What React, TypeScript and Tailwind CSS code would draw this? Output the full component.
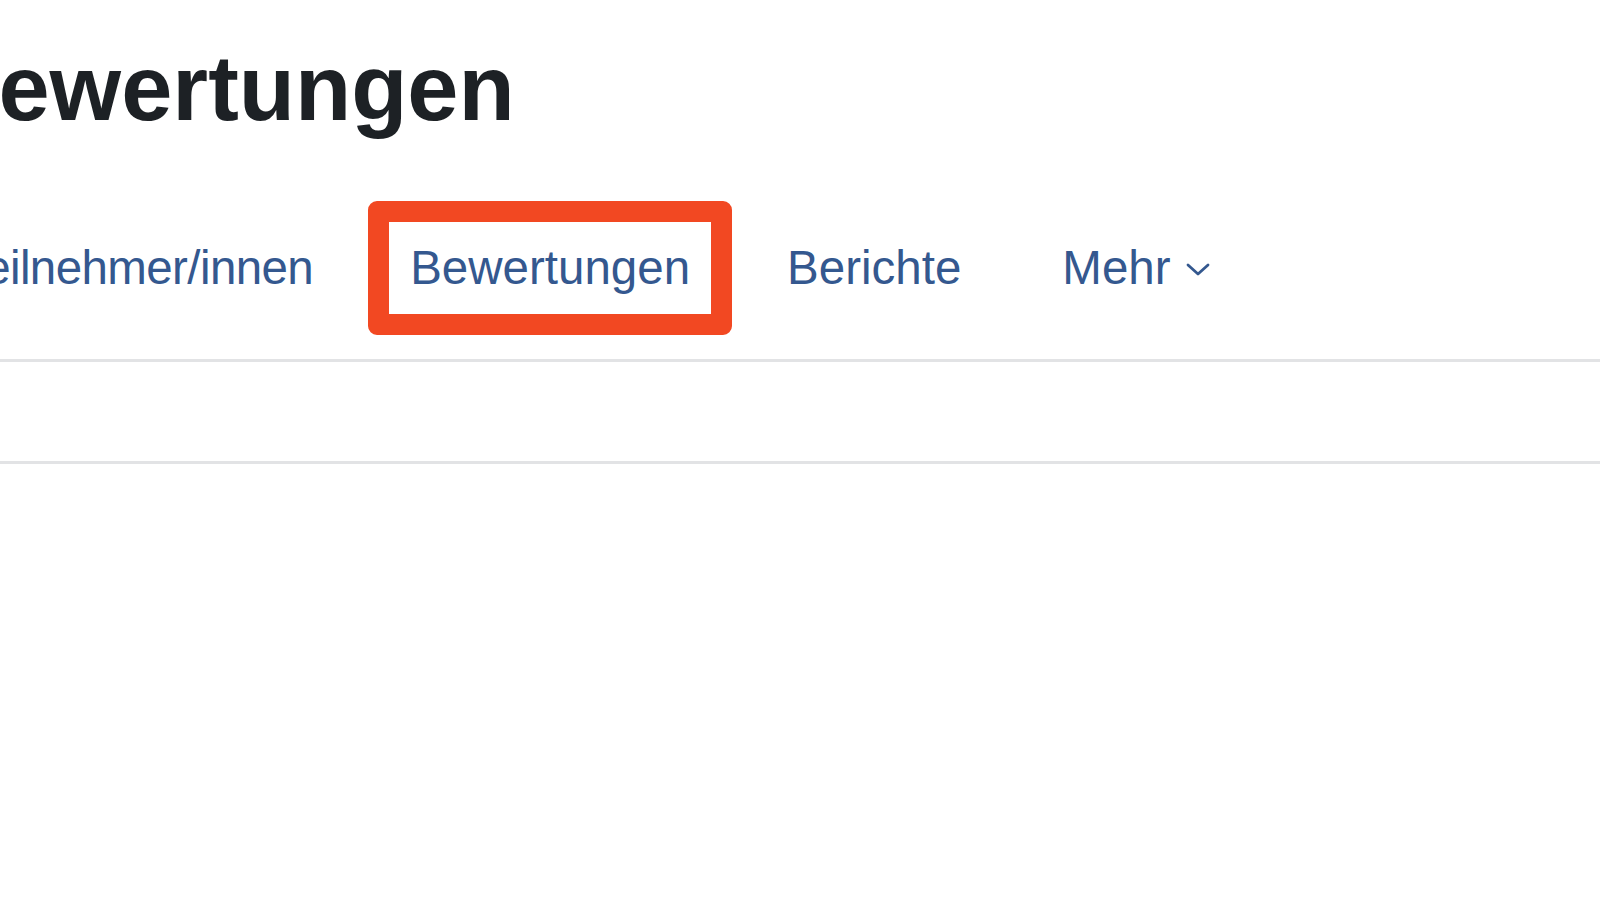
const tabs = ['Teilnehmer/innen', 'Bewertungen', 'Berichte'];

function ChevronDown() {
  return (
    <svg width="26" height="15" viewBox="0 0 26 15" fill="none" className="ml-[14px] mt-[3px]">
      <path d="M3 3l10 9 10-9" stroke="#34588f" strokeWidth="2.8" strokeLinecap="round" strokeLinejoin="round" />
    </svg>
  );
}

export default function App() {
  return (
    <main className="w-[1600px] h-[900px] overflow-hidden bg-white font-['Liberation_Sans',Arial,sans-serif]">
      {/* Seitentitel, links abgeschnitten */}
      <h1 className="pt-[33px] ml-[-68px] text-[92px] leading-[110px] font-bold text-[#1d2125] whitespace-nowrap">
        Bewertungen
      </h1>

      {/* Kursnavigation */}
      <nav className="mt-[58px] ml-[-81px] flex items-center gap-[13px] whitespace-nowrap">
        {tabs.map(tab => (
          <a
            key={tab}
            className={`h-[134px] px-[21px] flex items-center rounded-[9px] border-[21px] text-[47.5px] text-[#34588f] ${
              tab === 'Bewertungen' ? 'border-[#f24822]' : 'border-transparent'
            } ${tab === 'Teilnehmer/innen' ? 'tracking-[-0.6px]' : ''}`}
          >
            {tab}
          </a>
        ))}
        <a className="ml-[4px] h-[134px] px-[21px] flex items-center border-[21px] border-transparent text-[47.5px] text-[#34588f]">
          Mehr
          <ChevronDown />
        </a>
      </nav>

      <div className="mt-[24px] border-t-[3px] border-[#e2e3e5]" />
      <div className="mt-[99px] border-t-[3px] border-[#e2e3e5]" />
    </main>
  );
}
